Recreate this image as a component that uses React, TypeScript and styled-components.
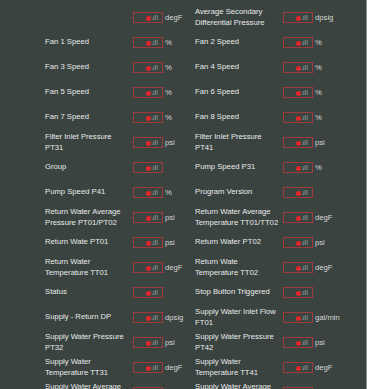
import React from "react";
import styled, { createGlobalStyle } from "styled-components";

type Item = { label: string; unit?: string };

const rows: [Item, Item][] = [
  [{ label: "", unit: "degF" }, { label: "Average Secondary Differential Pressure", unit: "dpsig" }],
  [{ label: "Fan 1 Speed", unit: "%" }, { label: "Fan 2 Speed", unit: "%" }],
  [{ label: "Fan 3 Speed", unit: "%" }, { label: "Fan 4 Speed", unit: "%" }],
  [{ label: "Fan 5 Speed", unit: "%" }, { label: "Fan 6 Speed", unit: "%" }],
  [{ label: "Fan 7 Speed", unit: "%" }, { label: "Fan 8 Speed", unit: "%" }],
  [{ label: "Filter Inlet Pressure PT31", unit: "psi" }, { label: "Filter Inlet Pressure PT41", unit: "psi" }],
  [{ label: "Group" }, { label: "Pump Speed P31", unit: "%" }],
  [{ label: "Pump Speed P41", unit: "%" }, { label: "Program Version" }],
  [
    { label: "Return Water Average Pressure PT01/PT02", unit: "psi" },
    { label: "Return Water Average Temperature TT01/TT02", unit: "degF" },
  ],
  [{ label: "Return Wate PT01", unit: "psi" }, { label: "Return Water PT02", unit: "psi" }],
  [
    { label: "Return Water Temperature TT01", unit: "degF" },
    { label: "Return Wate Temperature TT02", unit: "degF" },
  ],
  [{ label: "Status" }, { label: "Stop Button Triggered" }],
  [{ label: "Supply - Return DP", unit: "dpsig" }, { label: "Supply Water Inlet Flow FT01", unit: "gal/min" }],
  [{ label: "Supply Water Pressure PT32", unit: "psi" }, { label: "Supply Water Pressure PT42", unit: "psi" }],
  [
    { label: "Supply Water Temperature TT31", unit: "degF" },
    { label: "Supply Water Temperature TT41", unit: "degF" },
  ],
  [
    { label: "Supply Water Average Pressure PT32/PT42", unit: "psi" },
    { label: "Supply Water Average Temperature TT31/TT41", unit: "degF" },
  ],
];

const GlobalStyle = createGlobalStyle`
  html, body {
    margin: 0;
    padding: 0;
    background: #3b4341;
  }
  * {
    box-sizing: border-box;
  }
`;

const Page = styled.div`
  height: 389px;
  overflow-y: scroll;
  background: #3b4341;
  border-right: 1px solid #8e9694;
  font-family: "Liberation Sans", Arial, sans-serif;

  &::-webkit-scrollbar {
    width: 9px;
  }
  &::-webkit-scrollbar-track {
    background: #f0f0f0;
  }
  &::-webkit-scrollbar-thumb {
    background: #c2c2c2;
    border: 2px solid #f0f0f0;
  }
`;

const Grid = styled.div`
  display: grid;
  grid-template-columns: 150px 150px;
  grid-auto-rows: 25px;
  padding: 5px 0 20px 45px;
`;

const Cell = styled.div`
  display: flex;
  align-items: center;
`;

const Label = styled.div`
  width: 86px;
  margin-right: 2px;
  color: #e8eaea;
  font-size: 7.7px;
  line-height: 10.5px;
`;

const Value = styled.div`
  position: relative;
  width: 30px;
  height: 11px;
  border: 1px solid #a13a3a;
  color: #8f9c99;
  font-size: 7.7px;
  line-height: 9px;
  text-align: right;
  padding-right: 4px;
`;

const Dot = styled.span`
  position: absolute;
  left: 12px;
  top: 2.5px;
  width: 5px;
  height: 5px;
  border-radius: 50%;
  background: #e3262a;
  box-shadow: 0 0 0 1px #3b4341;
`;

const Unit = styled.span`
  margin-left: 2px;
  color: #d4d7d6;
  font-size: 7.7px;
`;

const Field = ({ label, unit }: Item) => (
  <Cell>
    <Label>{label}</Label>
    <Value>
      null
      <Dot />
    </Value>
    {unit && <Unit>{unit}</Unit>}
  </Cell>
);

export default function App() {
  return (
    <>
      <GlobalStyle />
      <Page>
        <Grid>
          {rows.map(([a, b], i) => (
            <React.Fragment key={i}>
              <Field {...a} />
              <Field {...b} />
            </React.Fragment>
          ))}
        </Grid>
      </Page>
    </>
  );
}
